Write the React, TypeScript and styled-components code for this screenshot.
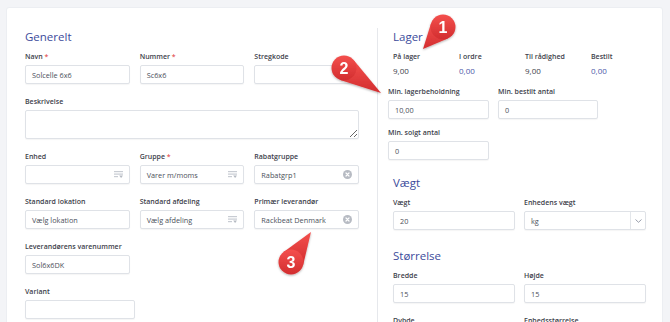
import React from 'react';
import styled, { createGlobalStyle } from 'styled-components';

const GlobalStyle = createGlobalStyle`
  html, body {
    margin: 0;
    padding: 0;
    background: #f3f4f7;
    font-family: 'Open Sans', 'Liberation Sans', sans-serif;
  }
  * {
    box-sizing: border-box;
  }
`;

type FieldData = {
  label: string;
  value?: string;
  required?: boolean;
  icon?: 'select' | 'clear';
  width?: number;
};

const row1: FieldData[] = [
  { label: 'Navn', value: 'Solcelle 6x6', required: true },
  { label: 'Nummer', value: 'Sc6x6', required: true },
  { label: 'Stregkode' },
];

const row2: FieldData[] = [
  { label: 'Enhed', icon: 'select' },
  { label: 'Gruppe', value: 'Varer m/moms', required: true, icon: 'select' },
  { label: 'Rabatgruppe', value: 'Rabatgrp1', icon: 'clear' },
];

const row3: FieldData[] = [
  { label: 'Standard lokation', value: 'Vælg lokation' },
  { label: 'Standard afdeling', value: 'Vælg afdeling', icon: 'select' },
  { label: 'Primær leverandør', value: 'Rackbeat Denmark', icon: 'clear' },
];

const stats = [
  { label: 'På lager', value: '9,00', accent: false },
  { label: 'I ordre', value: '0,00', accent: true },
  { label: 'Til rådighed', value: '9,00', accent: false },
  { label: 'Bestilt', value: '0,00', accent: true },
];

// callouts that sit over the form
const markers = [
  { n: 1, cx: 443, cy: 27, tx: 423, ty: 49 },
  { n: 2, cx: 344, cy: 68, tx: 381, ty: 93 },
  { n: 3, cx: 291, cy: 262, tx: 311, ty: 232 },
];

function SelectIcon() {
  return (
    <svg width="9" height="7" viewBox="0 0 9 7">
      <rect x="0" y="0" width="9" height="1.2" fill="#c8ccd3" />
      <rect x="0" y="2.5" width="9" height="1.2" fill="#c8ccd3" />
      <rect x="0" y="5" width="4" height="1.2" fill="#c8ccd3" />
      <polygon points="5.2,4.6 9,4.6 7.1,7" fill="#b5bac2" />
    </svg>
  );
}

function ClearIcon() {
  return (
    <svg width="9" height="9" viewBox="0 0 9 9">
      <circle cx="4.5" cy="4.5" r="4.5" fill="#b7bbc3" />
      <path
        d="M3 3 L6 6 M6 3 L3 6"
        stroke="#fff"
        strokeWidth="1.2"
        strokeLinecap="round"
      />
    </svg>
  );
}

function Field({ label, value, required, icon, width }: FieldData) {
  return (
    <FieldWrap style={width ? { width } : undefined}>
      <Label>
        {label}
        {required && <Req> *</Req>}
      </Label>
      <InputBox>
        <Value>{value}</Value>
        {icon === 'select' && <SelectIcon />}
        {icon === 'clear' && <ClearIcon />}
      </InputBox>
    </FieldWrap>
  );
}

type MarkerProps = { n: number; cx: number; cy: number; tx: number; ty: number };

function Marker({ n, cx, cy, tx, ty }: MarkerProps) {
  const r = 12.5;
  const dx = tx - cx;
  const dy = ty - cy;
  const d = Math.sqrt(dx * dx + dy * dy);
  const ux = dx / d;
  const uy = dy / d;
  const th = Math.acos(r / d);
  const p1x = cx + r * (ux * Math.cos(th) - uy * Math.sin(th));
  const p1y = cy + r * (ux * Math.sin(th) + uy * Math.cos(th));
  const p2x = cx + r * (ux * Math.cos(-th) - uy * Math.sin(-th));
  const p2y = cy + r * (ux * Math.sin(-th) + uy * Math.cos(-th));
  return (
    <g filter="url(#mshadow)">
      <polygon
        points={`${tx},${ty} ${p1x},${p1y} ${p2x},${p2y}`}
        fill="url(#mfill)"
      />
      <circle cx={cx} cy={cy} r={r} fill="url(#mfill)" />
      <MarkerText x={cx} y={cy + 5.5} textAnchor="middle">
        {n}
      </MarkerText>
    </g>
  );
}

export default function App() {
  return (
    <>
      <GlobalStyle />
      <Page>
        <Card>
          <LeftCol>
            <SectionTitle>Generelt</SectionTitle>
            <Grid3>
              {row1.map((f) => (
                <Field key={f.label} {...f} />
              ))}
            </Grid3>
            <FieldWrap>
              <Label>Beskrivelse</Label>
              <TextArea readOnly />
            </FieldWrap>
            <Grid3>
              {row2.map((f) => (
                <Field key={f.label} {...f} />
              ))}
            </Grid3>
            <Grid3>
              {row3.map((f) => (
                <Field key={f.label} {...f} />
              ))}
            </Grid3>
            <Grid3>
              <Field label="Leverandørens varenummer" value="Sol6x6DK" />
            </Grid3>
            <Field label="Variant" width={110} />
          </LeftCol>

          <RightCol>
            <SectionTitle>Lager</SectionTitle>
            <StatsRow>
              {stats.map((s) => (
                <Stat key={s.label}>
                  <Label>{s.label}</Label>
                  <StatValue $accent={s.accent}>{s.value}</StatValue>
                </Stat>
              ))}
            </StatsRow>
            <MinGrid $top={9}>
              <Field label="Min. lagerbeholdning" value="10,00" />
              <Field label="Min. bestilt antal" value="0" />
            </MinGrid>
            <MinGrid $top={8}>
              <Field label="Min. solgt antal" value="0" />
            </MinGrid>

            <SectionTitle $top={14}>Vægt</SectionTitle>
            <Grid2>
              <Field label="Vægt" value="20" />
              <FieldWrap>
                <Label>Enhedens vægt</Label>
                <SelectBox>
                  <Value>kg</Value>
                  <Caret>
                    <svg width="7" height="4" viewBox="0 0 7 4">
                      <path
                        d="M0.5 0.5 L3.5 3.3 L6.5 0.5"
                        stroke="#8d93a3"
                        strokeWidth="0.9"
                        fill="none"
                      />
                    </svg>
                  </Caret>
                </SelectBox>
              </FieldWrap>
            </Grid2>

            <SectionTitle $top={17}>Størrelse</SectionTitle>
            <Grid2>
              <Field label="Bredde" value="15" />
              <Field label="Højde" value="15" />
            </Grid2>
            <Grid2 $top={12}>
              <Field label="Dybde" />
              <Field label="Enhedsstørrelse" />
            </Grid2>
          </RightCol>
        </Card>

        <Overlay width="670" height="322" viewBox="0 0 670 322">
          <defs>
            <linearGradient id="mfill" x1="0" y1="0" x2="0" y2="1">
              <stop offset="0" stopColor="#f4504d" />
              <stop offset="1" stopColor="#d22d2f" />
            </linearGradient>
            <filter id="mshadow" x="-30%" y="-30%" width="160%" height="160%">
              <feDropShadow dx="0" dy="1" stdDeviation="0.8" floodOpacity="0.3" />
            </filter>
          </defs>
          {markers.map((m) => (
            <Marker key={m.n} {...m} />
          ))}
        </Overlay>
      </Page>
    </>
  );
}

const Page = styled.div`
  position: relative;
  width: 670px;
  height: 322px;
  overflow: hidden;
  background: #f3f4f7;
  padding: 7px 7px 0 6px;
`;

const Card = styled.div`
  display: flex;
  width: 657px;
  height: 330px;
  padding: 20px 18px 0 18px;
  background: #ffffff;
  border: 1px solid #eceef2;
  border-radius: 3px;
`;

const LeftCol = styled.div`
  width: 334px;
  flex-shrink: 0;
  display: flex;
  flex-direction: column;
  gap: 12px;

  & > h2 {
    margin-bottom: -7px;
  }
`;

const RightCol = styled.div`
  width: 269px;
  flex-shrink: 0;
  margin-left: 18px;
  padding-left: 15px;
  border-left: 1px solid #e6e8ec;
  display: flex;
  flex-direction: column;
`;

const SectionTitle = styled.h2<{ $top?: number }>`
  margin: ${(p) => p.$top || 0}px 0 5px 0;
  height: 18px;
  line-height: 18px;
  font-size: 11.5px;
  font-weight: 400;
  color: #3c4b9b;
`;

const Grid3 = styled.div`
  display: grid;
  grid-template-columns: repeat(3, 1fr);
  column-gap: 10px;
`;

const Grid2 = styled.div<{ $top?: number }>`
  display: grid;
  grid-template-columns: repeat(2, 122px);
  column-gap: 9px;
  margin-top: ${(p) => p.$top || 0}px;
`;

const MinGrid = styled.div<{ $top?: number }>`
  display: grid;
  grid-template-columns: 101px 100px;
  column-gap: 9px;
  margin-left: -5px;
  margin-top: ${(p) => p.$top || 0}px;
`;

const FieldWrap = styled.div`
  display: flex;
  flex-direction: column;
`;

const Label = styled.div`
  height: 12px;
  line-height: 12px;
  margin-bottom: 2px;
  font-size: 7px;
  font-weight: 600;
  color: #3d414b;
  white-space: nowrap;
`;

const Req = styled.span`
  color: #e45b5b;
`;

const InputBox = styled.div`
  display: flex;
  align-items: center;
  justify-content: space-between;
  height: 19px;
  padding: 0 6px 0 6px;
  background: #ffffff;
  border: 1px solid #dfe2e7;
  border-radius: 2px;
  box-shadow: 0 1px 1px rgba(0, 0, 0, 0.04);
`;

const SelectBox = styled(InputBox)`
  padding-right: 0;
`;

const Caret = styled.div`
  display: flex;
  align-items: center;
  justify-content: center;
  width: 15px;
  height: 100%;
  border-left: 1px solid #e3e6ea;
`;

const Value = styled.span`
  font-size: 7.3px;
  color: #4b505b;
  white-space: nowrap;
`;

const TextArea = styled.textarea`
  display: block;
  width: 100%;
  height: 29px;
  margin: 0;
  padding: 4px 6px;
  border: 1px solid #dfe2e7;
  border-radius: 2px;
  box-shadow: 0 1px 1px rgba(0, 0, 0, 0.04);
  resize: vertical;
  outline: none;
  font-family: inherit;
  font-size: 7.3px;
`;

const StatsRow = styled.div`
  display: grid;
  grid-template-columns: repeat(4, 66px);
`;

const Stat = styled.div`
  display: flex;
  flex-direction: column;

  & > div:first-child {
    margin-bottom: 1px;
  }
`;

const StatValue = styled.div<{ $accent: boolean }>`
  height: 13px;
  line-height: 13px;
  font-size: 8px;
  color: ${(p) => (p.$accent ? '#4c58a8' : '#3d414b')};
`;

const Overlay = styled.svg`
  position: absolute;
  left: 0;
  top: 0;
  pointer-events: none;
`;

const MarkerText = styled.text`
  font-family: 'Liberation Sans', Arial, sans-serif;
  font-weight: 700;
  font-size: 16px;
  fill: #ffffff;
`;
